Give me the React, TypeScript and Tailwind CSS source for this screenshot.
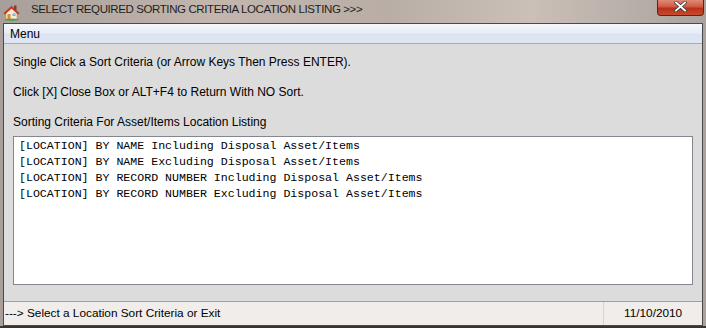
import React from "react";

const items = [
  "[LOCATION] BY NAME Including Disposal Asset/Items",
  "[LOCATION] BY NAME Excluding Disposal Asset/Items",
  "[LOCATION] BY RECORD NUMBER Including Disposal Asset/Items",
  "[LOCATION] BY RECORD NUMBER Excluding Disposal Asset/Items",
];

function HouseIcon() {
  return (
    <svg width="17" height="17" viewBox="0 0 17 17">
      <rect x="11" y="1.5" width="2.5" height="5" fill="#8a3a2a" />
      <path d="M3 8.5 L3 15 L14 15 L14 8.5 L8.5 4 Z" fill="#f3ead8" stroke="#b89a70" strokeWidth="0.6" />
      <rect x="4.5" y="10" width="3" height="5" fill="#e08a2a" />
      <rect x="9.5" y="9.5" width="3" height="2.5" fill="#7fb0e0" />
      <path d="M0.8 9.3 L8.5 2.2 L16.2 9.3 L14.8 10 L8.5 4.3 L2.2 10 Z" fill="#d43a1e" stroke="#9a2010" strokeWidth="0.5" />
      <ellipse cx="8.5" cy="15.8" rx="7" ry="1" fill="#4aa34a" />
    </svg>
  );
}

export default function App() {
  return (
    <div
      className="relative flex h-[328px] w-[706px] flex-col overflow-hidden bg-[linear-gradient(90deg,#a89f9a_0%,#c2b6ae_30%,#b9aea6_55%,#cbc0b8_75%,#a9a29d_100%)]"
      style={{ fontFamily: '"Liberation Sans", Arial, sans-serif' }}
    >
      {/* title bar */}
      <div className="flex h-[23px] shrink-0 items-center">
        <div className="ml-[3px] mt-[2px] flex h-[17px] w-[17px] items-center justify-center">
          <HouseIcon />
        </div>
        <div className="ml-[11px] mt-[-3px] text-[11.5px] tracking-[-0.4px] text-[#1e1e1e]">
          SELECT REQUIRED SORTING CRITERIA LOCATION LISTING &gt;&gt;&gt;
        </div>
      </div>
      <div className="absolute right-[2px] top-0 flex h-[16px] w-[47px] items-center justify-center rounded-b-[4px] border border-t-0 border-[#5a2418] bg-[linear-gradient(180deg,#e08a78_0%,#cf5a40_45%,#b83018_55%,#c84a30_100%)]">
        <svg width="13" height="11" viewBox="0 0 13 11" className="mt-[-2px]">
          <path d="M2 1.5 L11 9.5 M11 1.5 L2 9.5" stroke="#3a3a3a" strokeWidth="3.4" strokeLinecap="square" />
          <path d="M2 1.5 L11 9.5 M11 1.5 L2 9.5" stroke="#ffffff" strokeWidth="1.9" strokeLinecap="square" />
        </svg>
      </div>

      {/* client area */}
      <div className="mx-[3px] flex h-[303px] shrink-0 flex-col border border-[#4a4a4a] bg-[#dcdcdc]">
        {/* menu bar */}
        <div className="flex h-[20px] shrink-0 items-center border-b border-[#a8acb8] bg-[linear-gradient(180deg,#f4f7fc_0%,#e8edf8_45%,#dce3f2_55%,#dfe5f3_100%)] pl-[6px] text-[12px] text-black">
          Menu
        </div>
        {/* body */}
        <div className="flex flex-1 flex-col px-[9px] text-[12px] text-black">
          <div className="mt-[10px] h-[16px] leading-[16px]">
            Single Click a Sort Criteria (or Arrow Keys Then Press ENTER).
          </div>
          <div className="mt-[14px] h-[16px] leading-[16px]">
            Click [X] Close Box or ALT+F4 to Return With NO Sort.
          </div>
          <div className="mt-[14px] h-[16px] leading-[16px]">
            Sorting Criteria For Asset/Items Location Listing
          </div>
          <div
            className="mt-[6px] h-[149px] border border-[#828790] bg-white px-[5px] pt-[1px] text-[11.6px] leading-[16px] text-black"
            style={{ fontFamily: '"Liberation Mono", "Courier New", monospace' }}
          >
            {items.map((t) => (
              <div key={t} className="h-[16px] whitespace-pre">
                {t}
              </div>
            ))}
          </div>
        </div>
        {/* status bar */}
        <div className="flex h-[24px] shrink-0 items-center border-t border-[#a0a0a0] bg-[#f0edea] text-[11.8px] text-black">
          <div className="flex-1 pl-[1px]">---&gt; Select a Location Sort Criteria or Exit</div>
          <div className="flex h-full w-[99px] items-center border-l border-[#d8d4d0] pl-[20px]">11/10/2010</div>
        </div>
      </div>
      <div className="flex-1 bg-[#3a3430]" />
    </div>
  );
}
